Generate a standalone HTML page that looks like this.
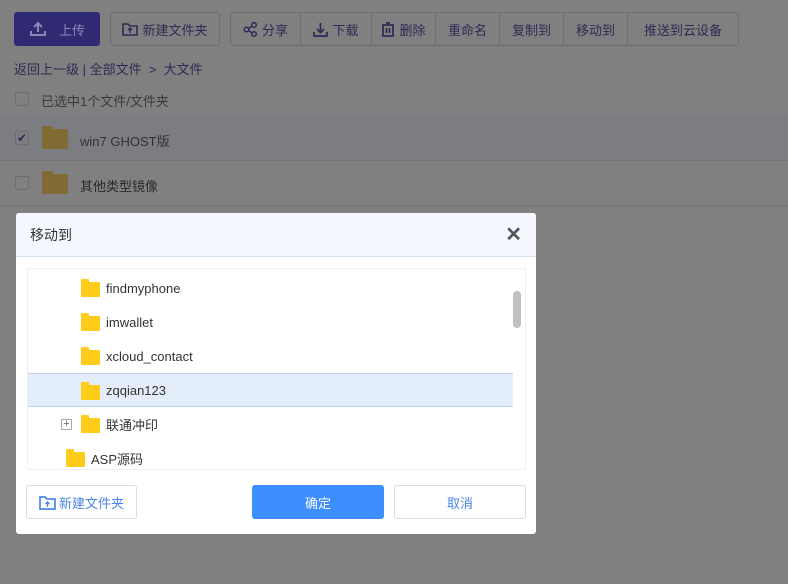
<!DOCTYPE html>
<html><head><meta charset="utf-8"><style>
*{box-sizing:border-box;margin:0;padding:0}
body{width:788px;height:584px;overflow:hidden;background:#808080;font-family:"Liberation Sans","Noto Sans CJK SC",sans-serif;font-size:13px;color:#333;position:relative}
.a{position:absolute}
.btn{position:absolute;top:12px;height:34px;border:1px solid #6d6d75;display:flex;align-items:center;justify-content:center;color:#2e2a55;font-size:13px;gap:4px}
.grp{position:absolute;top:12px;height:34px;left:230px;width:509px;border:1px solid #6d6d75;border-radius:3px;display:flex}
.grp div{height:100%;border-right:1px solid #6d6d75;display:flex;align-items:center;justify-content:center;color:#2e2a55;gap:4px}
.grp div:last-child{border-right:none}
.cb{position:absolute;left:15px;width:14px;height:14px;border:1px solid #6e6e72;border-radius:2px}
.fold{position:absolute;width:26px;height:20px;background:#7f6b33;border-radius:2px}
.fold:before{content:"";position:absolute;left:0;top:-3px;width:11px;height:4px;background:#7f6b33;border-radius:2px 2px 0 0}
.dlg{position:absolute;left:16px;top:213px;width:520px;height:321px;background:#fff;border-radius:3px}
.hd{height:44px;background:#f4f8fe;border-bottom:1px solid #d9e4f2;padding:0 14px;display:flex;align-items:center;font-size:14px;color:#333;border-radius:3px 3px 0 0}
.tree{position:absolute;left:11px;top:55px;width:499px;height:202px;border:1px solid #eef0f3;overflow:hidden}
.row{position:absolute;left:0;width:485px;height:34px;display:flex;align-items:center;color:#333;font-size:13px}
.yf{position:absolute;width:19px;height:15px;background:#ffcc1a;border-radius:1px}
.yf:before{content:"";position:absolute;left:0;top:-3px;width:8px;height:4px;background:#ffcc1a;border-radius:1px 1px 0 0}
.b2{position:absolute;top:272px;height:34px;border-radius:3px;display:flex;align-items:center;justify-content:center;font-size:13px}
</style></head><body>
<div class="btn" style="left:14px;width:86px;background:#2f2a72;border-color:#2f2a72;border-radius:3px;color:#8a87b8;gap:12px">
<svg width="18" height="16" viewBox="0 0 18 16"><path d="M9 11V2M5 6l4-4 4 4M2 10v4h14v-4" stroke="#8a87b8" stroke-width="2" fill="none"/></svg><span>上传</span></div>
<div class="btn" style="left:110px;width:110px;border-radius:3px"><svg width="16" height="14" viewBox="0 0 16 14"><path d="M1 2h5l2 2h7v9H1z" stroke="#2e2a55" stroke-width="1.6" fill="none"/><path d="M8 11V6M6 8l2-2 2 2" stroke="#2e2a55" stroke-width="1.4" fill="none"/></svg>新建文件夹</div>
<div class="grp">
<div style="width:70px"><svg width="15" height="15" viewBox="0 0 15 15"><circle cx="3.5" cy="7.5" r="2.3" stroke="#2e2a55" fill="none" stroke-width="1.5"/><circle cx="11" cy="3" r="2.3" stroke="#2e2a55" fill="none" stroke-width="1.5"/><circle cx="11" cy="12" r="2.3" stroke="#2e2a55" fill="none" stroke-width="1.5"/><path d="M5.5 6.5l3.5-2.5M5.5 8.5l3.5 2.5" stroke="#2e2a55" stroke-width="1.4"/></svg>分享</div>
<div style="width:71px"><svg width="15" height="15" viewBox="0 0 15 15"><path d="M7.5 1v9M4 7l3.5 3.5L11 7M1 10v4h13v-4" stroke="#2e2a55" stroke-width="1.7" fill="none"/></svg>下载</div>
<div style="width:64px"><svg width="14" height="15" viewBox="0 0 14 15"><path d="M1 3h12M5 1h4M2 3v11h10V3M5.5 6v5M8.5 6v5" stroke="#2e2a55" stroke-width="1.7" fill="none"/></svg>删除</div>
<div style="width:64px">重命名</div>
<div style="width:64px">复制到</div>
<div style="width:64px">移动到</div>
<div style="flex:1">推送到云设备</div>
</div>
<div class="a" style="left:14px;top:59px;color:#2e2a55">返回上一级 | 全部文件 &nbsp;&gt;&nbsp; 大文件</div>
<div class="cb" style="top:92px"></div><div class="a" style="left:41px;top:91px;color:#3a3a3e">已选中1个文件/文件夹</div>
<div class="a" style="left:0;top:115px;width:788px;height:46px;background:#7c7d81;border-bottom:1px solid #747478"></div>
<div class="cb" style="top:131px;color:#2e2a55;font-size:12px;line-height:12px;text-align:center">✔</div>
<div class="fold" style="left:42px;top:129px"></div>
<div class="a" style="left:80px;top:131px;color:#333">win7 GHOST版</div>
<div class="cb" style="top:176px"></div>
<div class="fold" style="left:42px;top:174px"></div>
<div class="a" style="left:80px;top:176px;color:#2a2a2a">其他类型镜像</div>
<div class="a" style="left:0;top:205px;width:788px;height:1px;background:#747478"></div>
<div class="dlg">
<div class="hd">移动到<span style="margin-left:auto;font-size:20px;color:#555;font-weight:bold">✕</span></div>
<div class="tree">
<div class="row" style="top:2px"><div class="yf" style="left:53px;top:11px"></div><span style="margin-left:78px">findmyphone</span></div>
<div class="row" style="top:36px"><div class="yf" style="left:53px;top:11px"></div><span style="margin-left:78px">imwallet</span></div>
<div class="row" style="top:70px"><div class="yf" style="left:53px;top:11px"></div><span style="margin-left:78px">xcloud_contact</span></div>
<div class="row" style="top:104px;background:#e4eefa;border-top:1px solid #bcd0e8;border-bottom:1px solid #bcd0e8"><div class="yf" style="left:53px;top:11px"></div><span style="margin-left:78px">zqqian123</span></div>
<div class="row" style="top:138px"><div class="a" style="left:33px;top:12px;width:11px;height:11px;border:1px solid #aaa;font-size:11px;line-height:8px;text-align:center;color:#666">+</div><div class="yf" style="left:53px;top:11px"></div><span style="margin-left:78px">联通冲印</span></div>
<div class="row" style="top:172px"><div class="yf" style="left:38px;top:11px"></div><span style="margin-left:63px">ASP源码</span></div>
<div class="a" style="left:485px;top:22px;width:8px;height:37px;background:#c1c1c1;border-radius:4px"></div>
</div>
<div class="b2" style="left:10px;width:111px;border:1px solid #d6dde8;color:#4a86e8;gap:3px"><svg width="17" height="15" viewBox="0 0 17 15"><path d="M1 2h5l2 2h8v10H1z" stroke="#4a86e8" stroke-width="1.7" fill="none"/><path d="M8.5 12V7M6.5 9l2-2 2 2" stroke="#4a86e8" stroke-width="1.4" fill="none"/></svg>新建文件夹</div>
<div class="b2" style="left:236px;width:132px;background:#3d8eff;color:#fff">确定</div>
<div class="b2" style="left:378px;width:132px;border:1px solid #d6dde8;color:#4a86e8">取消</div>
</div>
</body></html>
